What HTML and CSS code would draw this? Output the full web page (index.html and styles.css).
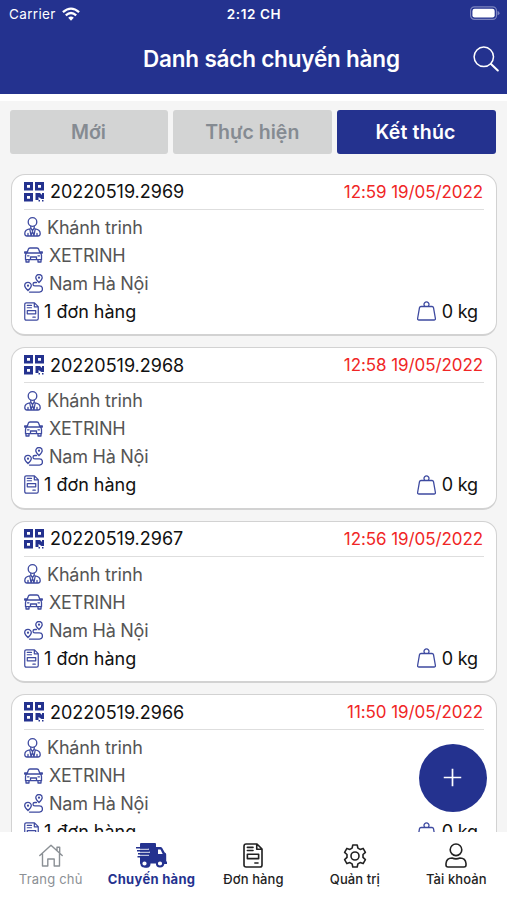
FILE: index.html
```html
<!DOCTYPE html>
<html lang="vi">
<head>
<meta charset="utf-8">
<meta name="viewport" content="width=device-width, initial-scale=1">
<title>Danh sách chuyến hàng</title>
<link rel="stylesheet" href="styles.css">
</head>
<body>
<svg class="sprite" aria-hidden="true">
  <symbol id="qr" viewBox="0 0 20 20"><path fill="currentColor" fill-rule="evenodd" d="M0 0h9v8.500H0zM3 3v2.800h3V3zM11 0h9v8.500h-9zM14 3v2.800h3V3zM0 11h9v8.500H0zM3 14v2.800h3V14zM11.500 11h4.500l2 2v-2h2v6h-2.500l-3-2v3h-3zM14.500 18H16v1.500h-1.500zM18 18h1.500v1.500H18z"/></symbol>
  <symbol id="driver" viewBox="0 0 17 20"><g fill="none" stroke="currentColor" stroke-width="1.300" stroke-linecap="round" stroke-linejoin="round"><circle cx="8.500" cy="5" r="4.300"/><path d="M6.800 9.200v2L8.500 13.500l1.700-2.300v-2M5.800 11.800C2.500 12.300.800 14 .800 16.500 .800 18.300 1.500 19 3 19h11c1.500 0 2.200-.7 2.200-2.500 0-2.500-1.700-4.200-5-4.700M5.800 12l1.200 6.500 1.500-4 1.500 4 1.200-6.500M4 16.500v2M13 16.500v2"/></g></symbol>
  <symbol id="car" viewBox="0 0 19 16"><g fill="none" stroke="currentColor" stroke-width="1.300" stroke-linejoin="round" stroke-linecap="round"><path d="M3 6 4.300 2.300Q4.700 1 6 1h7q1.300 0 1.700 1.300L16 6M3 6h13q1.500.800 1.500 2.500v4.200h-16V8.500Q1.500 6.800 3 6zM2.700 4.800H.700v1.200H3M16.300 4.800h2v1.200H16M2 13v2h3v-2M14 13v2h3v-2M6.500 12.500V10h6v2.500M3.500 8.800h1.500M14 8.800h1.500"/></g></symbol>
  <symbol id="route" viewBox="0 0 19 19"><g fill="none" stroke="currentColor" stroke-width="1.300" stroke-linecap="round"><path d="M15 8.500Q11.800 5.500 11.800 3.700a3.200 3.200 0 0 1 6.400 0Q18.200 5.500 15 8.500zM4 16.500Q.700 13.500.700 11.700a3.300 3.300 0 0 1 6.600 0Q7.300 13.500 4 16.500z"/><circle cx="15" cy="3.700" r=".5"/><circle cx="4" cy="11.700" r=".5"/><path d="M12.500 8.500h-1.700q-1.800 0-1.800 1.700t1.800 1.700h4.600a3 3 0 0 1 0 6.200H5.500"/></g></symbol>
  <symbol id="doc" viewBox="0 0 16 20"><g fill="none" stroke="currentColor" stroke-width="1.300" stroke-linejoin="round" stroke-linecap="round"><path d="M2.500.800h8.700l4 4v12.700q0 1.700-1.700 1.700h-11q-1.700 0-1.700-1.700v-15Q.800.800 2.500.800zM11 1v4h4M3.500 9h9v3.500h-9zM3.500 3.500H8M3.500 6H8M9.500 16H12"/></g></symbol>
  <symbol id="weight" viewBox="0 0 19 20"><g fill="none" stroke="currentColor" stroke-width="1.300" stroke-linejoin="round"><path d="M4 5.500h11q1.200 0 1.500 1.200l1.900 10.800q.100 1.500-1.300 1.500H1.900Q.500 19 .600 17.500L2.500 6.700Q2.800 5.500 4 5.500z"/><path d="M7.800 5.300a2.500 2.500 0 1 1 3.400 0"/></g></symbol>
  <symbol id="home" viewBox="0 0 24 23"><path fill="none" stroke="currentColor" stroke-width="1.400" stroke-linecap="round" stroke-linejoin="round" d="M.800 11.500 12 1.300l11.200 10.200M18 6.500V3.300h2.700v5.500M3.500 10v12h5.300v-7h6.400v7h5.300V10"/></symbol>
  <symbol id="truck" viewBox="0 0 31 25"><path fill="currentColor" d="M5 0h14q1 0 1 1v3h4.500q1 0 1.700 1l2.500 4.500q1.500.700 1.500 2V18l.800 1v2H28.500A4 4 0 0 1 21 20.500h-6.500A4 4 0 0 1 6.500 21H5q-1 0-1-1v-5V5V1q0-1 1-1z"/><path stroke="#fff" stroke-width="1" d="M3 6.200h10M3 9.200h11M3 12.200h10"/><path stroke="currentColor" stroke-width="1.500" d="M0 4.800h12M1 7.700h12M2 10.700h12M1.500 13.700h8"/><path fill="#fff" d="M22 6.500h2.500l2.200 4.500H22z"/><g fill="#fff" stroke="currentColor" stroke-width="2"><circle cx="8.500" cy="20.500" r="3.100"/><circle cx="24" cy="20.500" r="3.100"/></g></symbol>
  <symbol id="gear" viewBox="0 0 24 24"><g fill="none" stroke="currentColor" stroke-width="1.600" stroke-linejoin="round"><path d="M9.800 1h4.400l.7 3.100 2.200 1.300 3-1 2.300 3.900-2.400 2.200v2.900l2.400 2.300-2.300 3.900-3-1-2.200 1.300-.7 3.100H9.800l-.7-3.100-2.200-1.300-3 1-2.300-3.900L4 13.400v-2.900L1.600 8.300l2.300-3.900 3 1 2.200-1.300z"/><circle cx="12" cy="12" r="4"/></g></symbol>
  <symbol id="user" viewBox="0 0 22 25"><g fill="none" stroke="currentColor" stroke-width="1.600" stroke-linejoin="round"><circle cx="11" cy="6.800" r="5.800"/><path d="M1 22v-1.500q.500-5.500 6-5.500 4 1.800 8 0 5.500 0 6 5.500V22q0 2-2 2H3q-2 0-2-2z"/></g></symbol>
</svg>
<div class="screen">
  <header class="header">
    <div class="status">
      <div class="carrier"><span>Carrier</span>
        <svg class="wifi" viewBox="0 0 18 14"><g fill="none" stroke="#fff" stroke-width="2.300"><path d="M.900 5.200q8.100-7.200 16.200 0M3.800 8.300q5.200-4.600 10.400 0"/></g><path fill="#fff" d="M6.200 10.700q2.800-2.200 5.600 0L9 13.700z"/></svg>
      </div>
      <div class="clock">2:12 CH</div>
      <svg class="battery" viewBox="0 0 31 15"><rect x=".600" y=".600" width="26.800" height="13" rx="4" fill="none" stroke="#7c84bf" stroke-width="1.200"/><rect x="2.500" y="2.500" width="23" height="9.200" rx="2.300" fill="#fff"/><path fill="#7c84bf" d="M28.500 5q2 .500 2 2.200t-2 2.200z"/></svg>
    </div>
    <div class="titlebar">
      <h1 class="title">Danh sách chuyến hàng</h1>
      <svg class="search" viewBox="0 0 26 26"><g fill="none" stroke="#fff" stroke-width="1.500" stroke-linecap="round"><circle cx="10.800" cy="10.800" r="9.700"/><path stroke-width="2" d="m18 18 6.800 6.500"/></g></svg>
    </div>
  </header>
  <nav class="filters">
    <button class="filter">Mới</button>
    <button class="filter">Thực hiện</button>
    <button class="filter filter-active">Kết thúc</button>
  </nav>
  <main class="list">
    <article class="card">
      <div class="card-head"><svg class="i-qr"><use href="#qr"/></svg><span class="code">20220519.2969</span><time class="time">12:59 19/05/2022</time></div>
      <div class="row"><svg class="i-driver"><use href="#driver"/></svg><span class="name">Khánh trinh</span></div>
      <div class="row"><svg class="i-car"><use href="#car"/></svg><span class="plate">XETRINH</span></div>
      <div class="row"><svg class="i-route"><use href="#route"/></svg><span class="place">Nam Hà Nội</span></div>
      <div class="row row-total"><svg class="i-doc"><use href="#doc"/></svg><span class="orders">1 đơn hàng</span><svg class="i-weight"><use href="#weight"/></svg><span class="kg">0 kg</span></div>
    </article>
    <article class="card">
      <div class="card-head"><svg class="i-qr"><use href="#qr"/></svg><span class="code">20220519.2968</span><time class="time">12:58 19/05/2022</time></div>
      <div class="row"><svg class="i-driver"><use href="#driver"/></svg><span class="name">Khánh trinh</span></div>
      <div class="row"><svg class="i-car"><use href="#car"/></svg><span class="plate">XETRINH</span></div>
      <div class="row"><svg class="i-route"><use href="#route"/></svg><span class="place">Nam Hà Nội</span></div>
      <div class="row row-total"><svg class="i-doc"><use href="#doc"/></svg><span class="orders">1 đơn hàng</span><svg class="i-weight"><use href="#weight"/></svg><span class="kg">0 kg</span></div>
    </article>
    <article class="card">
      <div class="card-head"><svg class="i-qr"><use href="#qr"/></svg><span class="code">20220519.2967</span><time class="time">12:56 19/05/2022</time></div>
      <div class="row"><svg class="i-driver"><use href="#driver"/></svg><span class="name">Khánh trinh</span></div>
      <div class="row"><svg class="i-car"><use href="#car"/></svg><span class="plate">XETRINH</span></div>
      <div class="row"><svg class="i-route"><use href="#route"/></svg><span class="place">Nam Hà Nội</span></div>
      <div class="row row-total"><svg class="i-doc"><use href="#doc"/></svg><span class="orders">1 đơn hàng</span><svg class="i-weight"><use href="#weight"/></svg><span class="kg">0 kg</span></div>
    </article>
    <article class="card">
      <div class="card-head"><svg class="i-qr"><use href="#qr"/></svg><span class="code">20220519.2966</span><time class="time">11:50 19/05/2022</time></div>
      <div class="row"><svg class="i-driver"><use href="#driver"/></svg><span class="name">Khánh trinh</span></div>
      <div class="row"><svg class="i-car"><use href="#car"/></svg><span class="plate">XETRINH</span></div>
      <div class="row"><svg class="i-route"><use href="#route"/></svg><span class="place">Nam Hà Nội</span></div>
      <div class="row row-total"><svg class="i-doc"><use href="#doc"/></svg><span class="orders">1 đơn hàng</span><svg class="i-weight"><use href="#weight"/></svg><span class="kg">0 kg</span></div>
    </article>
  </main>
  <button class="fab" aria-label="Thêm"><svg viewBox="0 0 20 20"><path d="M10 .800v18.400M.800 10h18.400" stroke="#fff" stroke-width="1.800"/></svg></button>
  <nav class="tabbar">
    <a class="tab tab-muted"><svg class="t-home"><use href="#home"/></svg><span>Trang chủ</span></a>
    <a class="tab tab-active"><svg class="t-truck"><use href="#truck"/></svg><span>Chuyến hàng</span></a>
    <a class="tab"><svg class="t-doc"><use href="#doc"/></svg><span>Đơn hàng</span></a>
    <a class="tab"><svg class="t-gear"><use href="#gear"/></svg><span>Quản trị</span></a>
    <a class="tab"><svg class="t-user"><use href="#user"/></svg><span>Tài khoản</span></a>
  </nav>
</div>
</body>
</html>
```
FILE: styles.css
```css
* { box-sizing: border-box; }
body { margin: 0; font-family: Inter, "Liberation Sans", sans-serif; }
svg { display: block; flex: none; }
.sprite { position: absolute; width: 0; height: 0; }
.screen { position: relative; display: flex; flex-direction: column; width: 507px; height: 900px; overflow: hidden; background: #f5f5f5; }

.header { flex: none; height: 101px; background: #24328f; border-bottom: 7px solid #fff; color: #fff; }
.status { display: grid; grid-template-columns: 1fr auto 1fr; align-items: center; height: 27px; padding: 0 7px 0 8px; font-size: 13.500px; }
.carrier { display: flex; align-items: center; gap: 6px; padding-left: 1px; letter-spacing: .35px; }
.wifi { width: 18px; height: 14px; }
.clock { font-weight: 600; font-size: 13.500px; letter-spacing: .6px; }
.battery { width: 30px; height: 15px; justify-self: end; }
.titlebar { display: flex; align-items: center; height: 64px; padding: 0 8px 0 143px; }
.title { margin: 0; font-size: 22.500px; font-weight: 600; line-height: 30px; letter-spacing: -.2px; white-space: nowrap; }
.search { width: 26px; height: 26px; margin-left: auto; }

.filters { flex: none; display: grid; grid-template-columns: repeat(3, 1fr); gap: 5px; padding: 9px 11px 0 9.500px; }
.filter { height: 44px; padding: 0 1px 0 0; border: 0; border-radius: 3px; background: #d3d4d4; color: #858b92; font: 600 19.500px/44px Inter, sans-serif; }
.filter-active { background: #24328f; color: #fff; letter-spacing: .2px; padding-right: 2px; }

.list { flex: 1; min-height: 0; overflow: hidden; display: flex; flex-direction: column; gap: 11px; padding: 19.500px 10px 0 11px; }
.card { flex: none; height: 162.500px; padding: 0 12px 0 12px; border: 1px solid #d2d2d2; border-bottom-width: 2px; border-radius: 14px; background: #fff; }
.card-head { display: flex; align-items: center; height: 35px; margin-bottom: 3.500px; border-bottom: 1px solid #dedede; }
.code { margin-left: 6px; font-size: 18px; color: #111; }
.time { margin: 0 1px 0 auto; font-size: 17px; letter-spacing: -.08px; color: #f02626; }
.row { display: flex; align-items: center; height: 28.100px; font-size: 18px; color: #555; }
.row svg { color: #3e4aa0; }
.card-head svg { color: #24328f; }
.row-total { color: #111; padding-right: 6px; }
.i-qr { width: 20px; height: 20px; }
.i-driver { width: 17px; height: 20px; }
.i-car { width: 19px; height: 16px; }
.i-route { width: 19px; height: 19px; }
.i-doc { width: 15px; height: 19px; }
.i-weight { width: 19px; height: 20px; margin-left: auto; }
.name { margin-left: 6px; letter-spacing: -.2px; }
.plate { margin-left: 6px; letter-spacing: -.25px; }
.place { margin-left: 6px; letter-spacing: -.25px; }
.orders { margin-left: 5px; }
.kg { margin-left: 6px; letter-spacing: -.15px; }

.fab { position: absolute; left: 419px; top: 743.500px; display: grid; place-items: center; width: 68px; height: 68px; padding: 0 1px 0 0; border: 0; border-radius: 50%; background: #24328f; }
.fab svg { width: 19px; height: 19px; }

.tabbar { flex: none; display: grid; grid-template-columns: repeat(5, 1fr); height: 68px; background: #fff; }
.tab { display: grid; grid-template-rows: 27px 17px; align-items: center; justify-items: center; align-content: start; gap: 2px; padding-top: 10px; font-size: 13px; font-weight: 500; line-height: 17px; letter-spacing: .1px; color: #222; white-space: nowrap; }
.tab-muted { color: #8b9095; font-weight: 400; letter-spacing: .2px; }
.tab-active { color: #24328f; font-weight: 700; letter-spacing: .3px; padding-right: 1px; }
.t-home { width: 24px; height: 23px; }
.t-truck { width: 31px; height: 25px; }
.t-doc { width: 20px; height: 25px; }
.t-gear { width: 24px; height: 24px; }
.t-user { width: 22px; height: 25px; }
```
